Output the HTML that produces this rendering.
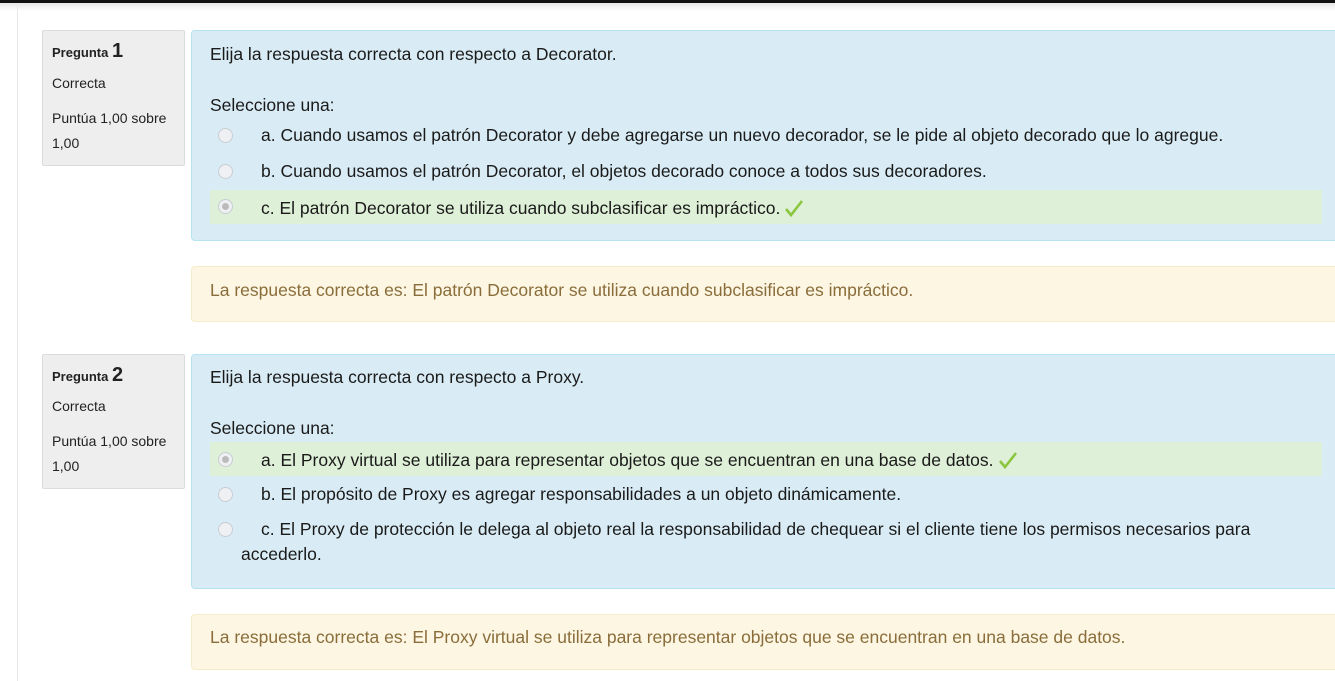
<!DOCTYPE html>
<html><head><meta charset="utf-8"><style>
*{margin:0;padding:0;box-sizing:border-box}
body{width:1335px;height:681px;overflow:hidden;background:#fff;font-family:"Liberation Sans",Arial,sans-serif;color:#1a1a1a;position:relative}
.abs{position:absolute}
.topbar{left:0;top:0;width:1335px;height:3px;background:#111}
.shadow{left:0;top:3px;width:1335px;height:8px;background:linear-gradient(#e6e6e6,#fff)}
.vline{left:17px;top:3px;width:1px;height:678px;background:#e8e8e8}
.info{background:#eee;border:1px solid #dcdcdc;border-radius:2px;width:143px;font-size:14px;color:#222}
.content{background:#d9ecf5;border:1px solid #b5e3ef;border-radius:4px;left:191px;width:1160px}
.fb{background:#fcf6e2;border:1px solid #f5ecc9;border-radius:4px;left:191px;width:1160px;height:56px}
.t{font-size:17.5px;line-height:18px;white-space:nowrap}
.radio{width:15px;height:15px;border-radius:50%;background:#eef0f3;border:1px solid #c8cdd2}
.radio.on::after{content:"";position:absolute;left:3px;top:3px;width:7px;height:7px;border-radius:50%;background:#bbb}
.green{background:#dff0d8;left:210px;width:1112px;height:34px}
.ck{display:inline-block;vertical-align:-4px;margin-left:4px}
</style></head><body>
<div class="abs topbar"></div><div class="abs shadow"></div><div class="abs vline"></div>

<!-- Q1 -->
<div class="abs info" style="left:42px;top:30px;height:136px">
 <div class="abs" style="left:9px;top:9px;font-size:13px;font-weight:bold">Pregunta <span style="font-size:20px">1</span></div>
 <div class="abs" style="left:9px;top:44px">Correcta</div>
 <div class="abs" style="left:9px;top:79px">Puntúa 1,00 sobre</div>
 <div class="abs" style="left:9px;top:104px">1,00</div>
</div>
<div class="abs content" style="top:30px;height:211px"></div>
<div class="abs t" style="left:210px;top:45px">Elija la respuesta correcta con respecto a Decorator.</div>
<div class="abs t" style="left:210px;top:96px">Seleccione una:</div>
<div class="abs radio" style="left:218px;top:128px"></div>
<div class="abs t" style="left:261px;top:126px">a. Cuando usamos el patrón Decorator y debe agregarse un nuevo decorador, se le pide al objeto decorado que lo agregue.</div>
<div class="abs radio" style="left:218px;top:164px"></div>
<div class="abs t" style="left:261px;top:162px">b. Cuando usamos el patrón Decorator, el objetos decorado conoce a todos sus decoradores.</div>
<div class="abs green" style="top:190px"></div>
<div class="abs radio on" style="left:218px;top:199px"></div>
<div class="abs t" style="left:261px;top:198px">c. El patrón Decorator se utiliza cuando subclasificar es impráctico.<svg class="ck" width="20" height="20" viewBox="0 0 20 20"><path d="M2 11 L7 17 L18 3" fill="none" stroke="#8cc63f" stroke-width="2.6"/></svg></div>
<div class="abs fb" style="top:266px"></div>
<div class="abs t" style="left:210px;top:281px;color:#8a6d3b">La respuesta correcta es: El patrón Decorator se utiliza cuando subclasificar es impráctico.</div>

<!-- Q2 -->
<div class="abs info" style="left:42px;top:354px;height:135px">
 <div class="abs" style="left:9px;top:9px;font-size:13px;font-weight:bold">Pregunta <span style="font-size:20px">2</span></div>
 <div class="abs" style="left:9px;top:43px">Correcta</div>
 <div class="abs" style="left:9px;top:78px">Puntúa 1,00 sobre</div>
 <div class="abs" style="left:9px;top:103px">1,00</div>
</div>
<div class="abs content" style="top:354px;height:235px"></div>
<div class="abs t" style="left:210px;top:368px">Elija la respuesta correcta con respecto a Proxy.</div>
<div class="abs t" style="left:210px;top:419px">Seleccione una:</div>
<div class="abs green" style="top:442px"></div>
<div class="abs radio on" style="left:218px;top:452px"></div>
<div class="abs t" style="left:261px;top:450px">a. El Proxy virtual se utiliza para representar objetos que se encuentran en una base de datos.<svg class="ck" width="20" height="20" viewBox="0 0 20 20"><path d="M2 11 L7 17 L18 3" fill="none" stroke="#8cc63f" stroke-width="2.6"/></svg></div>
<div class="abs radio" style="left:218px;top:487px"></div>
<div class="abs t" style="left:261px;top:485px">b. El propósito de Proxy es agregar responsabilidades a un objeto dinámicamente.</div>
<div class="abs radio" style="left:218px;top:522px"></div>
<div class="abs t" style="left:261px;top:520px">c. El Proxy de protección le delega al objeto real la responsabilidad de chequear si el cliente tiene los permisos necesarios para</div>
<div class="abs t" style="left:241px;top:545px">accederlo.</div>
<div class="abs fb" style="top:614px"></div>
<div class="abs t" style="left:210px;top:628px;color:#8a6d3b">La respuesta correcta es: El Proxy virtual se utiliza para representar objetos que se encuentran en una base de datos.</div>
</body></html>
